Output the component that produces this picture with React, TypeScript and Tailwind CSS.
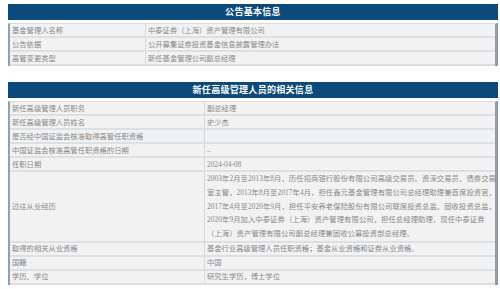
import React from 'react';

type Row = { label: string; value: React.ReactNode; lines?: number };

const basicRows: Row[] = [
  { label: '基金管理人名称', value: '中泰证券（上海）资产管理有限公司' },
  { label: '公告依据', value: '公开募集证券投资基金信息披露管理办法' },
  { label: '高管变更类型', value: '新任基金管理公司副总经理' },
];

const careerLines = [
  '2003年2月至2013年8月，历任招商银行股份有限公司高级交易员、资深交易员、债券交易',
  '室主管，2013年8月至2017年4月，担任鑫元基金管理有限公司总经理助理兼首席投资官，',
  '2017年4月至2020年9月，担任平安养老保险股份有限公司联席投资总监、固收投资总监，',
  '2020年9月加入中泰证券（上海）资产管理有限公司，担任总经理助理，现任中泰证券',
  '（上海）资产管理有限公司副总经理兼固收公募投资部总经理。',
];

const managerRows: Row[] = [
  { label: '新任高级管理人员职务', value: '副总经理' },
  { label: '新任高级管理人员姓名', value: '史少杰' },
  { label: '是否经中国证监会核准取得高管任职资格', value: '' },
  { label: '中国证监会核准高管任职资格的日期', value: '–' },
  { label: '任职日期', value: '2024-04-08' },
  {
    label: '过往从业经历',
    lines: 5,
    value: careerLines.map((line, i) => (
      <div key={i} className="whitespace-nowrap h-[13.8px] tracking-[0.1px]">
        {line}
      </div>
    )),
  },
  {
    label: '取得的相关从业资格',
    value: '基金行业高级管理人员任职资格；基金从业资格和证券从业资格。',
  },
  { label: '国籍', value: '中国' },
  { label: '学历、学位', value: '研究生学历，博士学位' },
];

const Header = ({ title }: { title: string }) => (
  <div className="h-4 bg-[#0b4a7b] flex items-center justify-center text-white font-bold text-[9px] tracking-[0.3px]">
    {title}
  </div>
);

const InfoTable = ({ rows, labelWidth }: { rows: Row[]; labelWidth: string }) => (
  <div className="border-l-2 border-l-[#8ea2b4] border-r-[3px] border-r-[#8d9ba8] border-t border-t-[#d5dce2]">
    {rows.map((row) => (
      <div
        key={row.label}
        className={`flex bg-[#f2f2f2] border-b-2 border-b-[#d9e0e6] ${row.lines ? 'min-h-[69px]' : 'h-[14px]'}`}
      >
        <div className={`${labelWidth} shrink-0 flex items-center pl-[2px] border-r border-r-[#d3d9de]`}>
          {row.label}
        </div>
        <div className="flex-1 flex flex-col justify-center pl-[2px]">{row.value}</div>
      </div>
    ))}
  </div>
);

export default function App() {
  return (
    <div
      className="w-[500px] h-[289px] bg-white pl-2 pr-[2px] pt-1 text-[7.3px] leading-[13px] text-[#888888] overflow-hidden"
      style={{ fontFamily: '"Liberation Serif", "Noto Sans CJK SC", serif' }}
    >
      <Header title="公告基本信息" />
      <div className="mt-[3px]">
        <InfoTable rows={basicRows} labelWidth="w-[136px]" />
      </div>
      <div className="mt-[16px]">
        <Header title="新任高级管理人员的相关信息" />
      </div>
      <div className="mt-[3px]">
        <InfoTable rows={managerRows} labelWidth="w-[195px]" />
      </div>
    </div>
  );
}
